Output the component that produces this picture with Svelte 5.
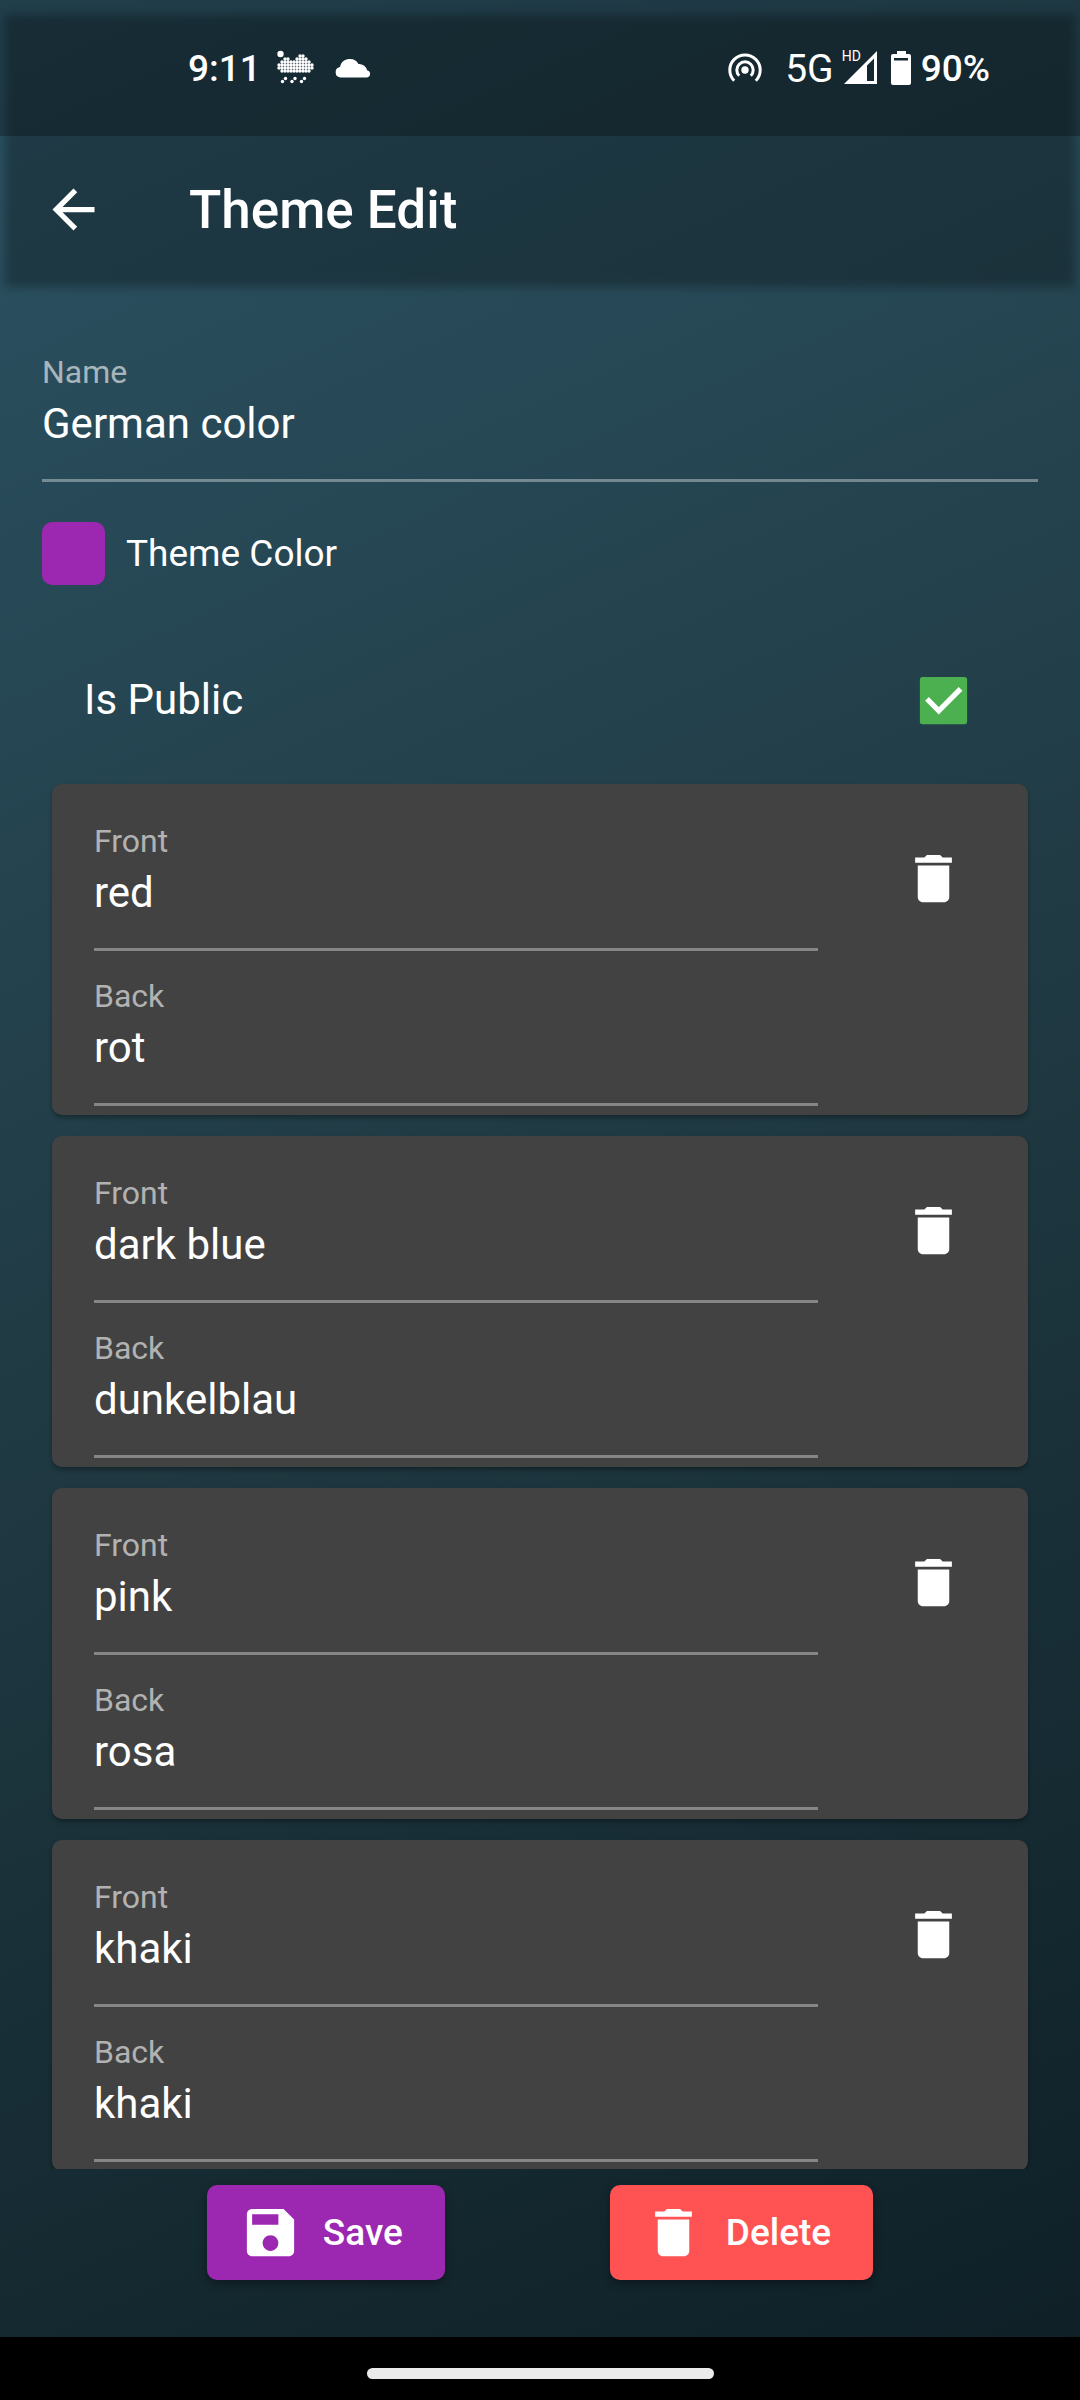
<script>
  let name = $state('German color');
  let isPublic = $state(true);
  let pairs = $state([
    { front: 'red', back: 'rot' },
    { front: 'dark blue', back: 'dunkelblau' },
    { front: 'pink', back: 'rosa' },
    { front: 'khaki', back: 'khaki' }
  ]);

  // Rows of the dotted rain cloud: [first column, last column] runs per row.
  const cloudRows = [
    [[7, 8]],
    [[2, 3], [6, 9]],
    [[1, 10]],
    [[0, 11]],
    [[0, 11]],
    [[1, 10]]
  ];
  const dots = cloudRows.flatMap((runs, row) =>
    runs.flatMap(([from, to]) =>
      Array.from({ length: to - from + 1 }, (_, i) => ({ x: 2 + (from + i) * 3, y: 6 + row * 3 }))
    )
  );

  function remove(index) {
    pairs.splice(index, 1);
  }
</script>

{#snippet trash()}
  <svg class="icon" viewBox="0 0 24 24" aria-hidden="true">
    <path d="M6 19c0 1.1.9 2 2 2h8c1.1 0 2-.9 2-2V7H6v12zM19 4h-3.500l-1-1h-5l-1 1H5v2h14V4z" />
  </svg>
{/snippet}

<div class="page">
  <div class="screen">
    <header>
      <div class="status">
        <span class="clock">9:11</span>
        <svg class="rain" viewBox="0 0 38 36" aria-hidden="true">
          <circle cx="3.500" cy="4" r="3.2" />
          {#each dots as d}
            <circle cx={d.x} cy={d.y} r="1.7" />
          {/each}
          <circle cx="8.500" cy="28.500" r="1.7" /><circle cx="5.500" cy="31.500" r="1.7" />
          <circle cx="18" cy="28.500" r="1.7" /><circle cx="15" cy="31.500" r="1.7" />
          <circle cx="27.500" cy="28.500" r="1.7" /><circle cx="24.500" cy="31.500" r="1.7" />
        </svg>
        <svg class="cloud" viewBox="0 0 36 23" aria-hidden="true">
          <path d="M5.500 20.500A5.300 5.300 0 0 1 5 10A10 10 0 0 1 23.500 7A8 8 0 0 1 32 13.200A3.700 3.700 0 0 1 32 20.500Z" />
        </svg>
        <span class="spacer"></span>
        <svg class="hotspot" viewBox="0 0 34 32" aria-hidden="true">
          <circle cx="17" cy="18" r="3.700" />
          <path d="M11.200 23.800A8.200 8.200 0 1 1 22.800 23.800M6.200 28.800A15.200 15.200 0 1 1 27.800 28.800" />
        </svg>
        <span class="net">5G</span>
        <span class="signal">
          <svg viewBox="0 0 33 34" aria-hidden="true">
            <path fill-rule="evenodd" d="M0 33L33 0V33ZM23 30H30V7.500L23 14.500Z" />
          </svg>
          <span class="hd">HD</span>
        </span>
        <svg class="battery" viewBox="0 0 20 34" aria-hidden="true">
          <path fill-rule="evenodd" d="M6 0H15V3H18A2 2 0 0 1 20 5V32A2 2 0 0 1 18 34H2A2 2 0 0 1 0 32V5A2 2 0 0 1 2 3H6ZM3 7V9.500H17V7Z" />
        </svg>
        <span class="clock">90%</span>
      </div>
      <div class="appbar">
        <button class="plain" aria-label="Back">
          <svg class="icon" viewBox="0 0 24 24" aria-hidden="true">
            <path d="M20 11H7.830l5.590-5.590L12 4l-8 8 8 8 1.410-1.410L7.830 13H20v-2z" />
          </svg>
        </button>
        <h1>Theme Edit</h1>
      </div>
    </header>

    <main>
      <section class="details">
        <div class="field">
          <label for="name">Name</label>
          <input id="name" type="text" bind:value={name} />
        </div>
        <button class="plain color">
          <span class="swatch"></span>
          <span>Theme Color</span>
        </button>
        <label class="public">
          <span>Is Public</span>
          <input type="checkbox" bind:checked={isPublic} />
          <svg class="icon" viewBox="0 0 24 24" aria-hidden="true">
            <rect class="box" x="3" y="3" width="18" height="18" rx="1" />
            {#if isPublic}
              <path class="tick" d="M5.700 11.400L10.200 15.900L18.500 7.600" />
            {/if}
          </svg>
        </label>
      </section>

      <ul>
        {#each pairs as pair, i}
          <li>
            <div class="fields">
              <div class="field">
                <label for="front-{i}">Front</label>
                <input id="front-{i}" type="text" bind:value={pair.front} />
              </div>
              <div class="field">
                <label for="back-{i}">Back</label>
                <input id="back-{i}" type="text" bind:value={pair.back} />
              </div>
            </div>
            <button class="plain remove" aria-label="Remove pair" onclick={() => remove(i)}>
              {@render trash()}
            </button>
          </li>
        {/each}
      </ul>

      <div class="actions">
        <button class="action save">
          <svg class="icon" viewBox="0 0 24 24" aria-hidden="true">
            <path d="M17 3H5c-1.110 0-2 .9-2 2v14c0 1.100.890 2 2 2h14c1.100 0 2-.9 2-2V7l-4-4zm-5 16c-1.660 0-3-1.340-3-3s1.340-3 3-3 3 1.340 3 3-1.340 3-3 3zm3-10H5V5h10v4z" />
          </svg>
          Save
        </button>
        <button class="action delete">
          {@render trash()}
          Delete
        </button>
      </div>
    </main>
  </div>
  <div class="nav"><span class="pill"></span></div>
</div>

<style>
  :global(body) {
    margin: 0;
    background: #000;
  }
  .page {
    display: flex;
    flex-direction: column;
    height: 100vh;
    color: #fff;
    font-family: Roboto, sans-serif;
    font-size: 42px;
    line-height: 62px;
  }
  .screen {
    flex: 1;
    min-height: 0;
    display: flex;
    flex-direction: column;
    background: linear-gradient(156deg, #2c5364, #203a43 50%, #0f2027);
  }
  svg {
    display: block;
    flex: none;
    fill: currentColor;
  }
  .icon {
    width: 63px;
    height: 63px;
  }
  button {
    font: inherit;
    color: inherit;
    border: 0;
    cursor: pointer;
  }
  .plain {
    padding: 0;
    background: none;
  }

  header {
    position: relative;
    z-index: 0;
  }
  /* Soft elevation shadow that shows through the transparent bar */
  header::before {
    content: '';
    position: absolute;
    z-index: -1;
    inset: 15px 5px -4px;
    background: rgba(0, 0, 0, 0.28);
    filter: blur(5px);
  }
  .status {
    display: flex;
    align-items: center;
    height: 136px;
    padding: 0 90px 0 188px;
    box-sizing: border-box;
    background: rgba(0, 0, 0, 0.25);
    line-height: 44px;
  }
  .clock,
  .net {
    padding-top: 2px;
    font-size: 37px;
    font-weight: 500;
  }
  .net {
    margin-right: 10px;
    font-size: 39px;
    font-weight: 400;
  }
  .rain {
    width: 38px;
    height: 36px;
    margin: 0 20px 0 16px;
  }
  .cloud {
    width: 36px;
    height: 23px;
  }
  .spacer {
    flex: 1;
  }
  .hotspot {
    width: 34px;
    height: 32px;
    margin-right: 23px;
  }
  .hotspot path {
    fill: none;
    stroke: currentColor;
    stroke-width: 3;
  }
  .signal {
    position: relative;
    margin-right: 14px;
  }
  .signal svg {
    width: 33px;
    height: 34px;
  }
  .hd {
    position: absolute;
    left: -2px;
    top: -2px;
    font-size: 14px;
    line-height: 14px;
  }
  .battery {
    width: 20px;
    height: 34px;
    margin-right: 10px;
  }
  .appbar {
    display: flex;
    align-items: center;
    gap: 84px;
    height: 147px;
    padding: 0 42px;
  }
  h1 {
    margin: 0;
    font-size: 53px;
    font-weight: 500;
    line-height: 64px;
  }

  main {
    flex: 1;
    min-height: 0;
    display: flex;
    flex-direction: column;
  }
  .details {
    display: flex;
    flex-direction: column;
    padding: 44px 42px 0;
  }
  .field {
    display: flex;
    flex-direction: column;
    padding-top: 25px;
  }
  .field label {
    font-size: 32px;
    line-height: 40px;
    color: rgba(255, 255, 255, 0.6);
  }
  .field input {
    width: 100%;
    height: 90px;
    box-sizing: border-box;
    padding: 0 0 25px;
    border: 0;
    border-bottom: 3px solid rgba(255, 255, 255, 0.36);
    background: none;
    color: inherit;
    font: inherit;
    outline: 0;
  }
  .color {
    display: flex;
    align-items: center;
    gap: 21px;
    margin-top: 40px;
    font-size: 37px;
  }
  .swatch {
    width: 63px;
    height: 63px;
    border-radius: 10px;
    background: #9c27b0;
  }
  .public {
    display: flex;
    align-items: center;
    justify-content: space-between;
    height: 126px;
    margin-top: 52px;
    padding: 0 63px 0 42px;
  }
  .public input {
    position: absolute;
    opacity: 0;
  }
  .box {
    fill: #4caf50;
  }
  .tick {
    fill: none;
    stroke: #fff;
    stroke-width: 2;
  }

  ul {
    flex: 1;
    min-height: 0;
    display: flex;
    flex-direction: column;
    gap: 21px;
    margin: 0;
    padding: 21px 52px 0;
    list-style: none;
    overflow-y: auto;
    scrollbar-width: none;
  }
  li {
    flex: none;
    display: flex;
    align-items: flex-start;
    gap: 52px;
    padding: 12px 32px 9px 42px;
    border-radius: 10px;
    background: #424242;
    box-shadow: 0 3px 4px rgba(0, 0, 0, 0.3);
  }
  .fields {
    flex: 1;
  }
  .remove {
    display: grid;
    place-items: center;
    width: 126px;
    height: 126px;
    margin-top: 19px;
  }

  .actions {
    display: flex;
    justify-content: space-evenly;
    padding: 16px 42px 57px;
  }
  .action {
    display: flex;
    align-items: center;
    gap: 21px;
    height: 95px;
    padding: 0 42px 0 32px;
    border-radius: 10px;
    box-shadow: 0 4px 8px rgba(0, 0, 0, 0.35);
    font-size: 37px;
    font-weight: 500;
  }
  .save {
    background: #9c27b0;
  }
  .delete {
    background: #ff5252;
  }

  .nav {
    display: flex;
    justify-content: center;
    padding: 31px 0 21px;
    background: #000;
  }
  .pill {
    width: 347px;
    height: 11px;
    border-radius: 6px;
    background: #ebebeb;
  }
</style>
